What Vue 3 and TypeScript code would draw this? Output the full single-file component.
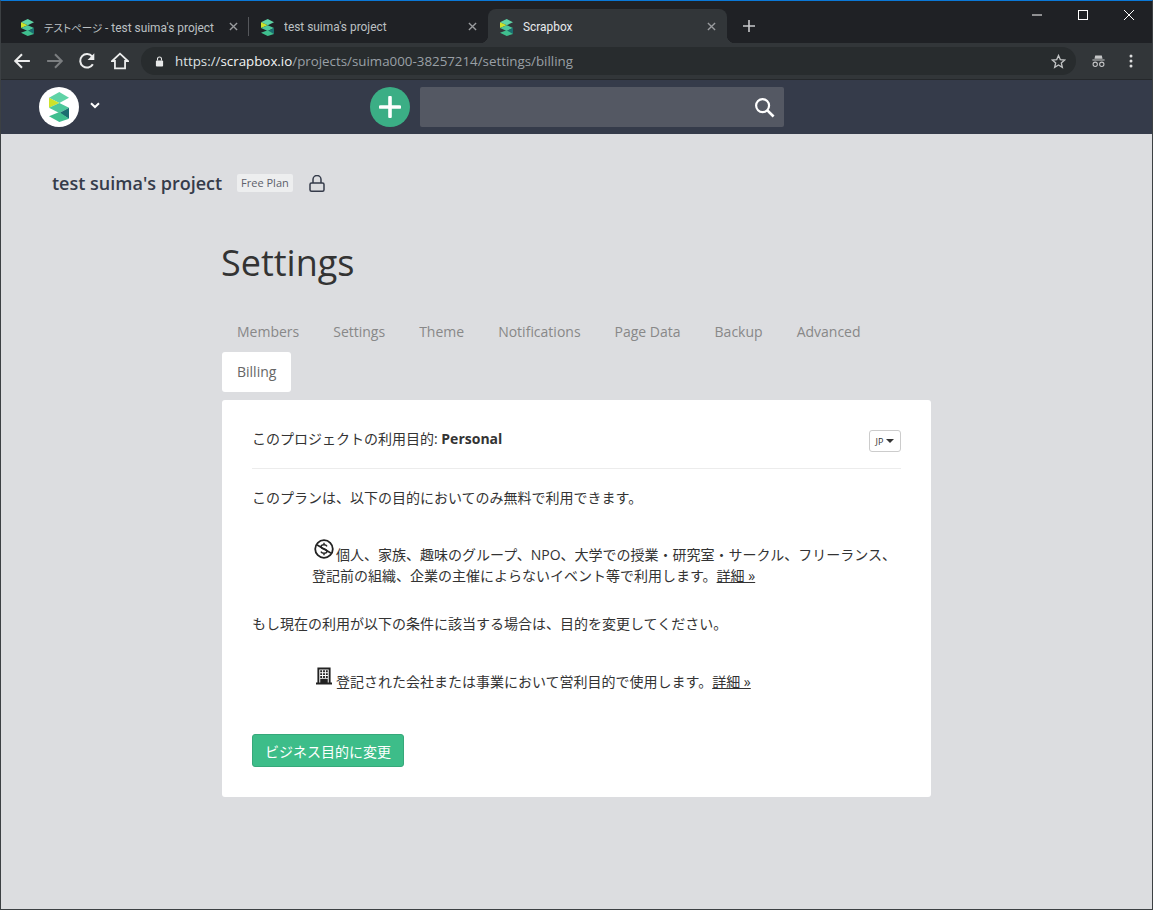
<script setup lang="ts">
const tabs = [
  { prefix: 'テストページ', title: ' - test suima\'s project', active: false },
  { prefix: '', title: 'test suima\'s project', active: false },
  { prefix: '', title: 'Scrapbox', active: true },
]
const settingsTabs = ['Members', 'Settings', 'Theme', 'Notifications', 'Page Data', 'Backup', 'Advanced', 'Billing']
</script>

<template>
  <div class="window">
    <header class="titlebar">
      <div
        v-for="(tab, i) in tabs"
        :key="i"
        class="tab"
        :class="{ active: tab.active, divided: i === 0 }"
      >
        <svg class="favicon" viewBox="0 0 58 90" width="13" height="17" preserveAspectRatio="none">
          <polygon points="0,17 30,0 58,17 30,33" fill="#5fd3a6" />
          <polygon points="0,17 30,33 0,47" fill="#cde22a" />
          <polygon points="0,47 30,33 58,47 30,63" fill="#4cc79b" />
          <polygon points="58,47 30,63 58,80" fill="#1b6e70" />
          <polygon points="0,73 30,60 58,80 30,90" fill="#3fbf8f" />
        </svg>
        <span class="tab-title"><span v-if="tab.prefix" class="tab-jp">{{ tab.prefix }}</span>{{ tab.title }}</span>
        <svg class="tab-close" viewBox="0 0 10 10" width="9" height="9">
          <path d="M1 1 9 9M9 1 1 9" stroke="#9a9c9f" stroke-width="1.5" />
        </svg>
      </div>
      <svg class="newtab" viewBox="0 0 12 12" width="12" height="12">
        <path d="M6 0V12M0 6H12" stroke="#c8c9cb" stroke-width="1.6" />
      </svg>
      <div class="winctl">
        <svg viewBox="0 0 10 10" width="10" height="10"><path d="M0 5H10" stroke="#fff" /></svg>
        <svg viewBox="0 0 10 10" width="10" height="10"><rect x=".5" y=".5" width="9" height="9" fill="none" stroke="#fff" /></svg>
        <svg viewBox="0 0 10 10" width="10" height="10"><path d="M0 0 10 10M10 0 0 10" stroke="#fff" /></svg>
      </div>
    </header>

    <div class="toolbar">
      <svg class="tool" viewBox="0 0 16 16" width="18" height="18">
        <path d="M15 8H2M8 2 2 8l6 6" fill="none" stroke="#eceded" stroke-width="1.8" />
      </svg>
      <svg class="tool" viewBox="0 0 16 16" width="18" height="18">
        <path d="M1 8H14M8 2l6 6-6 6" fill="none" stroke="#7b7e80" stroke-width="1.8" />
      </svg>
      <svg class="tool" viewBox="0 0 16 16" width="18" height="18">
        <path d="M13.2 10.8A6 6 0 1 1 12.6 4" fill="none" stroke="#eceded" stroke-width="1.8" />
        <path d="M14.5 1v6h-6z" fill="#eceded" />
      </svg>
      <svg class="tool" viewBox="0 0 16 16" width="18" height="18">
        <path d="M8 1.5 1 8h2.500v6.500h9V8H15z" fill="none" stroke="#eceded" stroke-width="1.6" />
      </svg>
      <div class="omnibox">
        <svg viewBox="0 0 10 12" width="9" height="11" class="padlock">
          <path d="M2.800 5V3.200a2.200 2.200 0 0 1 4.400 0V5" fill="none" stroke="#e8e9e9" stroke-width="1.2" />
          <rect x="1" y="5" width="8" height="6.500" rx="1" fill="#e8e9e9" />
        </svg>
        <span class="url"><span class="dim-a">https://</span><span class="host">scrapbox.io</span><span class="dim">/projects/suima000-38257214/settings/billing</span></span>
        <svg class="star" viewBox="0 0 16 16" width="15" height="15">
          <path d="M8 1.600 9.900 6l4.700.4-3.600 3.100 1.100 4.700L8 11.700l-4.100 2.500L5 9.500 1.400 6.400 6.100 6z" fill="none" stroke="#c2c4c5" stroke-width="1.400" />
        </svg>
      </div>
      <svg class="incognito" viewBox="0 0 16 14" width="15" height="14">
        <path d="M4.500 1h7l.8 3.500H3.700zM1.500 5.500h13v1h-13z" fill="#c6c7c8" />
        <circle cx="4.500" cy="10.500" r="2.300" fill="none" stroke="#c6c7c8" stroke-width="1.100" />
        <circle cx="11.500" cy="10.500" r="2.300" fill="none" stroke="#c6c7c8" stroke-width="1.100" />
      </svg>
      <svg class="kebab" viewBox="0 0 4 14" width="4" height="14">
        <circle cx="2" cy="2" r="1.500" fill="#dcdddd" />
        <circle cx="2" cy="7" r="1.500" fill="#dcdddd" />
        <circle cx="2" cy="12" r="1.500" fill="#dcdddd" />
      </svg>
    </div>

    <nav class="navbar">
      <div class="brand">
        <svg viewBox="0 0 58 90" width="20" height="30" preserveAspectRatio="none">
          <polygon points="0,17 30,0 58,17 30,33" fill="#5fd3a6" />
          <polygon points="0,17 30,33 0,47" fill="#cde22a" />
          <polygon points="0,47 30,33 58,47 30,63" fill="#4cc79b" />
          <polygon points="58,47 30,63 58,80" fill="#1b6e70" />
          <polygon points="0,73 30,60 58,80 30,90" fill="#3fbf8f" />
        </svg>
      </div>
      <svg class="chev" viewBox="0 0 10 7" width="10" height="7">
        <path d="M1 1.200 5 5l4-3.800" fill="none" stroke="#fff" stroke-width="2" />
      </svg>
      <div class="add">
        <svg viewBox="0 0 22 22" width="22" height="22">
          <path d="M11 1.500V20.500M1.500 11H20.500" stroke="#fff" stroke-width="3.600" stroke-linecap="round" />
        </svg>
      </div>
      <div class="search">
        <svg viewBox="0 0 22 22" width="21" height="21">
          <circle cx="9" cy="9" r="6.800" fill="none" stroke="#fff" stroke-width="2.300" />
          <path d="M14 14 20.500 20.500" stroke="#fff" stroke-width="2.800" />
        </svg>
      </div>
    </nav>

    <main class="page">
      <div class="project">
        <span class="project-name">test suima's project</span>
        <span class="plan">Free Plan</span>
        <svg viewBox="0 0 16 17" width="16" height="17" class="lock">
          <path d="M4 8V4.500a4 4 0 0 1 8 0V8" fill="none" stroke="#353b4a" stroke-width="1.500" />
          <rect x="1" y="8" width="14" height="8.200" rx="1.500" fill="none" stroke="#353b4a" stroke-width="1.500" />
        </svg>
      </div>

      <section class="settings">
        <h1>Settings</h1>
        <ul class="tabs">
          <li v-for="t in settingsTabs" :key="t" :class="{ current: t === 'Billing' }">{{ t }}</li>
        </ul>
        <div class="card">
          <div class="card-head">
            <span>このプロジェクトの利用目的: <strong>Personal</strong></span>
            <button class="lang">JP<i class="caret"></i></button>
          </div>
          <p class="lead">このプランは、以下の目的においてのみ無料で利用できます。</p>
          <p class="note note-a">
            <svg class="glyph glyph-a" viewBox="0 0 20 20" width="20" height="20">
              <circle cx="10" cy="10" r="8.800" fill="none" stroke="#222" stroke-width="1.800" />
              <path d="M3.200 6 16.800 14" stroke="#222" stroke-width="1.600" />
              <path d="M13 7.300C12.400 6.200 11.200 5.700 10 5.700c-1.700 0-3 .8-3 2 0 3 6 1.700 6 4.600 0 1.300-1.400 2-3 2-1.200 0-2.500-.5-3.100-1.600M10 3.800v2M10 14.200v2" fill="none" stroke="#222" stroke-width="1.400" />
            </svg>個人、家族、趣味のグループ、NPO、大学での授業・研究室・サークル、フリーランス、登記前の組織、企業の主催によらないイベント等で利用します。<a>詳細 »</a>
          </p>
          <p class="lead second">もし現在の利用が以下の条件に該当する場合は、目的を変更してください。</p>
          <p class="note note-b">
            <svg class="glyph glyph-b" viewBox="0.5 1 17 18" width="16" height="18">
              <path fill-rule="evenodd" fill="#222" d="M2 1h14v16h1.500v2H.5v-2H2zM4 3v14h10V3zM5 4h2v2H5zM8 4h2v2H8zM11 4h2v2h-2zM5 7h2v2H5zM8 7h2v2H8zM11 7h2v2h-2zM5 10h2v2H5zM8 10h2v2H8zM11 10h2v2h-2zM5 13h8v4H5z" />
            </svg>登記された会社または事業において営利目的で使用します。<a>詳細 »</a>
          </p>
          <button class="cta">ビジネス目的に変更</button>
        </div>
      </section>
    </main>
  </div>
</template>

<style>
html, body { margin: 0; padding: 0; background: #dcdde0; }
</style>

<style scoped>
.window {
  width: 1153px;
  height: 910px;
  box-sizing: border-box;
  display: flex;
  flex-direction: column;
  overflow: hidden;
  border-top: 1px solid #0a78d7;
  border-left: 1px solid #3c4043;
  border-right: 1px solid #3c4043;
  border-bottom: 1px solid #3c4043;
  background: #dcdde0;
  font-family: "Open Sans", "Noto Sans CJK JP", sans-serif;
  color: #333;
}
.titlebar {
  height: 42px;
  flex: none;
  background: #1f2125;
  display: flex;
  align-items: flex-end;
  padding-left: 8px;
  box-sizing: border-box;
}
.tab {
  position: relative;
  width: 239px;
  height: 34px;
  box-sizing: border-box;
  display: flex;
  align-items: center;
  padding: 0 11px 0 12px;
  font: 11.9px Roboto, "Noto Sans CJK JP", sans-serif;
  color: #bcc0c3;
}
.tab-jp { font-size: 10.5px; font-feature-settings: "palt"; }
.tab.divided { width: 240px; }
.tab.divided::after {
  content: "";
  position: absolute;
  right: 0;
  top: 8px;
  width: 1px;
  height: 19px;
  background: #55575b;
}
.tab.active {
  background: #323639;
  color: #e8eaed;
  border-radius: 8px 8px 0 0;
}
.tab.active::before,
.tab.active::after {
  content: "";
  position: absolute;
  bottom: 0;
  width: 8px;
  height: 8px;
}
.tab.active::before {
  left: -8px;
  background: radial-gradient(circle at 0 0, transparent 8px, #323639 8.5px);
}
.tab.active::after {
  right: -8px;
  background: radial-gradient(circle at 100% 0, transparent 8px, #323639 8.5px);
}
.favicon { flex: none; margin: 2px 10px 0 0; }
.tab-title { flex: 1; min-width: 0; white-space: pre; overflow: hidden; margin-top: 2px; }
.tab-close { flex: none; margin-left: 4px; }
.newtab { margin: 0 0 11px 16px; }
.winctl {
  margin-left: auto;
  align-self: flex-start;
  display: flex;
  gap: 36px;
  padding: 9px 18px 0 0;
}
.toolbar {
  height: 37px;
  flex: none;
  box-sizing: border-box;
  background: #323639;
  border-bottom: 1px solid #25282b;
  display: flex;
  align-items: center;
  padding: 0 12px;
  gap: 14.5px;
}
.tool { flex: none; }
.omnibox {
  width: 935px;
  height: 28px;
  margin-left: -2px;
  box-sizing: border-box;
  border-radius: 14px;
  background: #282c2e;
  display: flex;
  align-items: center;
  padding: 0 10px 0 14px;
  font-size: 13.33px;
  flex: none;
}
.padlock { flex: none; margin-right: 11px; }
.url { flex: 1; white-space: nowrap; }
.dim-a { color: #dfe1e3; }
.host { color: #f5f6f6; }
.dim { color: #9aa0a6; }
.incognito { flex: none; margin-left: .5px; }
.kebab { flex: none; margin-left: 8.500px; }
.navbar {
  height: 54px;
  flex: none;
  background: #353b4a;
  display: flex;
  align-items: center;
  padding-left: 38px;
}
.brand {
  width: 40px;
  height: 40px;
  border-radius: 50%;
  background: #fff;
  display: flex;
  align-items: center;
  justify-content: center;
}
.chev { margin: 0 0 4px 11px; }
.add {
  width: 40px;
  height: 40px;
  border-radius: 50%;
  background: #3bae85;
  margin-left: 270px;
  display: flex;
  align-items: center;
  justify-content: center;
}
.search {
  width: 364px;
  height: 40px;
  margin-left: 10px;
  box-sizing: border-box;
  background: #545863;
  border-radius: 2px;
  display: flex;
  align-items: center;
  justify-content: flex-end;
  padding-right: 9px;
}
.page { flex: 1; }
.project {
  display: flex;
  align-items: center;
  padding: 38px 0 0 51px;
  height: 22px;
}
.project-name {
  font-size: 18px;
  font-weight: 600;
  color: #353b4a;
}
.plan {
  margin-left: 15px;
  height: 18px;
  line-height: 18px;
  padding: 0 4px;
  font-size: 11px;
  color: #5d5f6b;
  background: #edeeef;
  border-radius: 2px;
}
.lock { margin-left: 16px; }
.settings { width: 709px; margin: 0 0 0 221px; }
h1 {
  margin: 44px 0 0 -1px;
  font-size: 36px;
  line-height: 50px;
  font-weight: 400;
  color: #333;
}
.tabs {
  list-style: none;
  margin: 24px 0 0;
  padding: 0;
  display: flex;
  flex-wrap: wrap;
  gap: 0 4px;
}
.tabs li {
  height: 40px;
  line-height: 40px;
  padding: 0 15px;
  font-size: 14px;
  color: #888;
}
.tabs li.current { background: #fff; color: #666; border-radius: 3px; }
.card {
  margin-top: 8px;
  height: 397px;
  box-sizing: border-box;
  background: #fff;
  border-radius: 3px;
  padding: 28px 30px 30px;
  font-size: 14px;
  line-height: 21px;
  color: #333;
}
.card-head {
  height: 40px;
  border-bottom: 1px solid #ececec;
  display: flex;
  justify-content: space-between;
  align-items: flex-start;
}
.card-head strong { font-weight: 700; }
.lang {
  width: 32px;
  height: 22px;
  margin-top: 2px;
  box-sizing: border-box;
  padding: 0;
  background: #fff;
  border: 1px solid #ccc;
  border-radius: 3px;
  font: 9px "Open Sans", sans-serif;
  color: #333;
  display: flex;
  align-items: center;
  justify-content: center;
  gap: 3px;
}
.caret {
  width: 0;
  height: 0;
  border-left: 4px solid transparent;
  border-right: 4px solid transparent;
  border-top: 4px solid #333;
}
p { margin: 0; }
.lead { margin-top: 18px; }
.lead.second { margin-top: 27px; }
.note { margin-left: 60px; width: 589px; }
.note-a { margin-top: 31px; }
.note-b { margin-top: 33px; }
.glyph-a { vertical-align: 1px; margin: 0 2px 0 2px; }
.glyph-b { vertical-align: 2px; margin: 0 4px 0 4px; }
.note a { text-decoration: underline; }
.cta {
  display: block;
  margin-top: 42px;
  width: 152px;
  height: 33px;
  padding: 0;
  box-sizing: border-box;
  background: #3dbd89;
  border: 1px solid #36a87a;
  border-radius: 3px;
  color: #fff;
  font: 14px "Open Sans", "Noto Sans CJK JP", sans-serif;
}
</style>
